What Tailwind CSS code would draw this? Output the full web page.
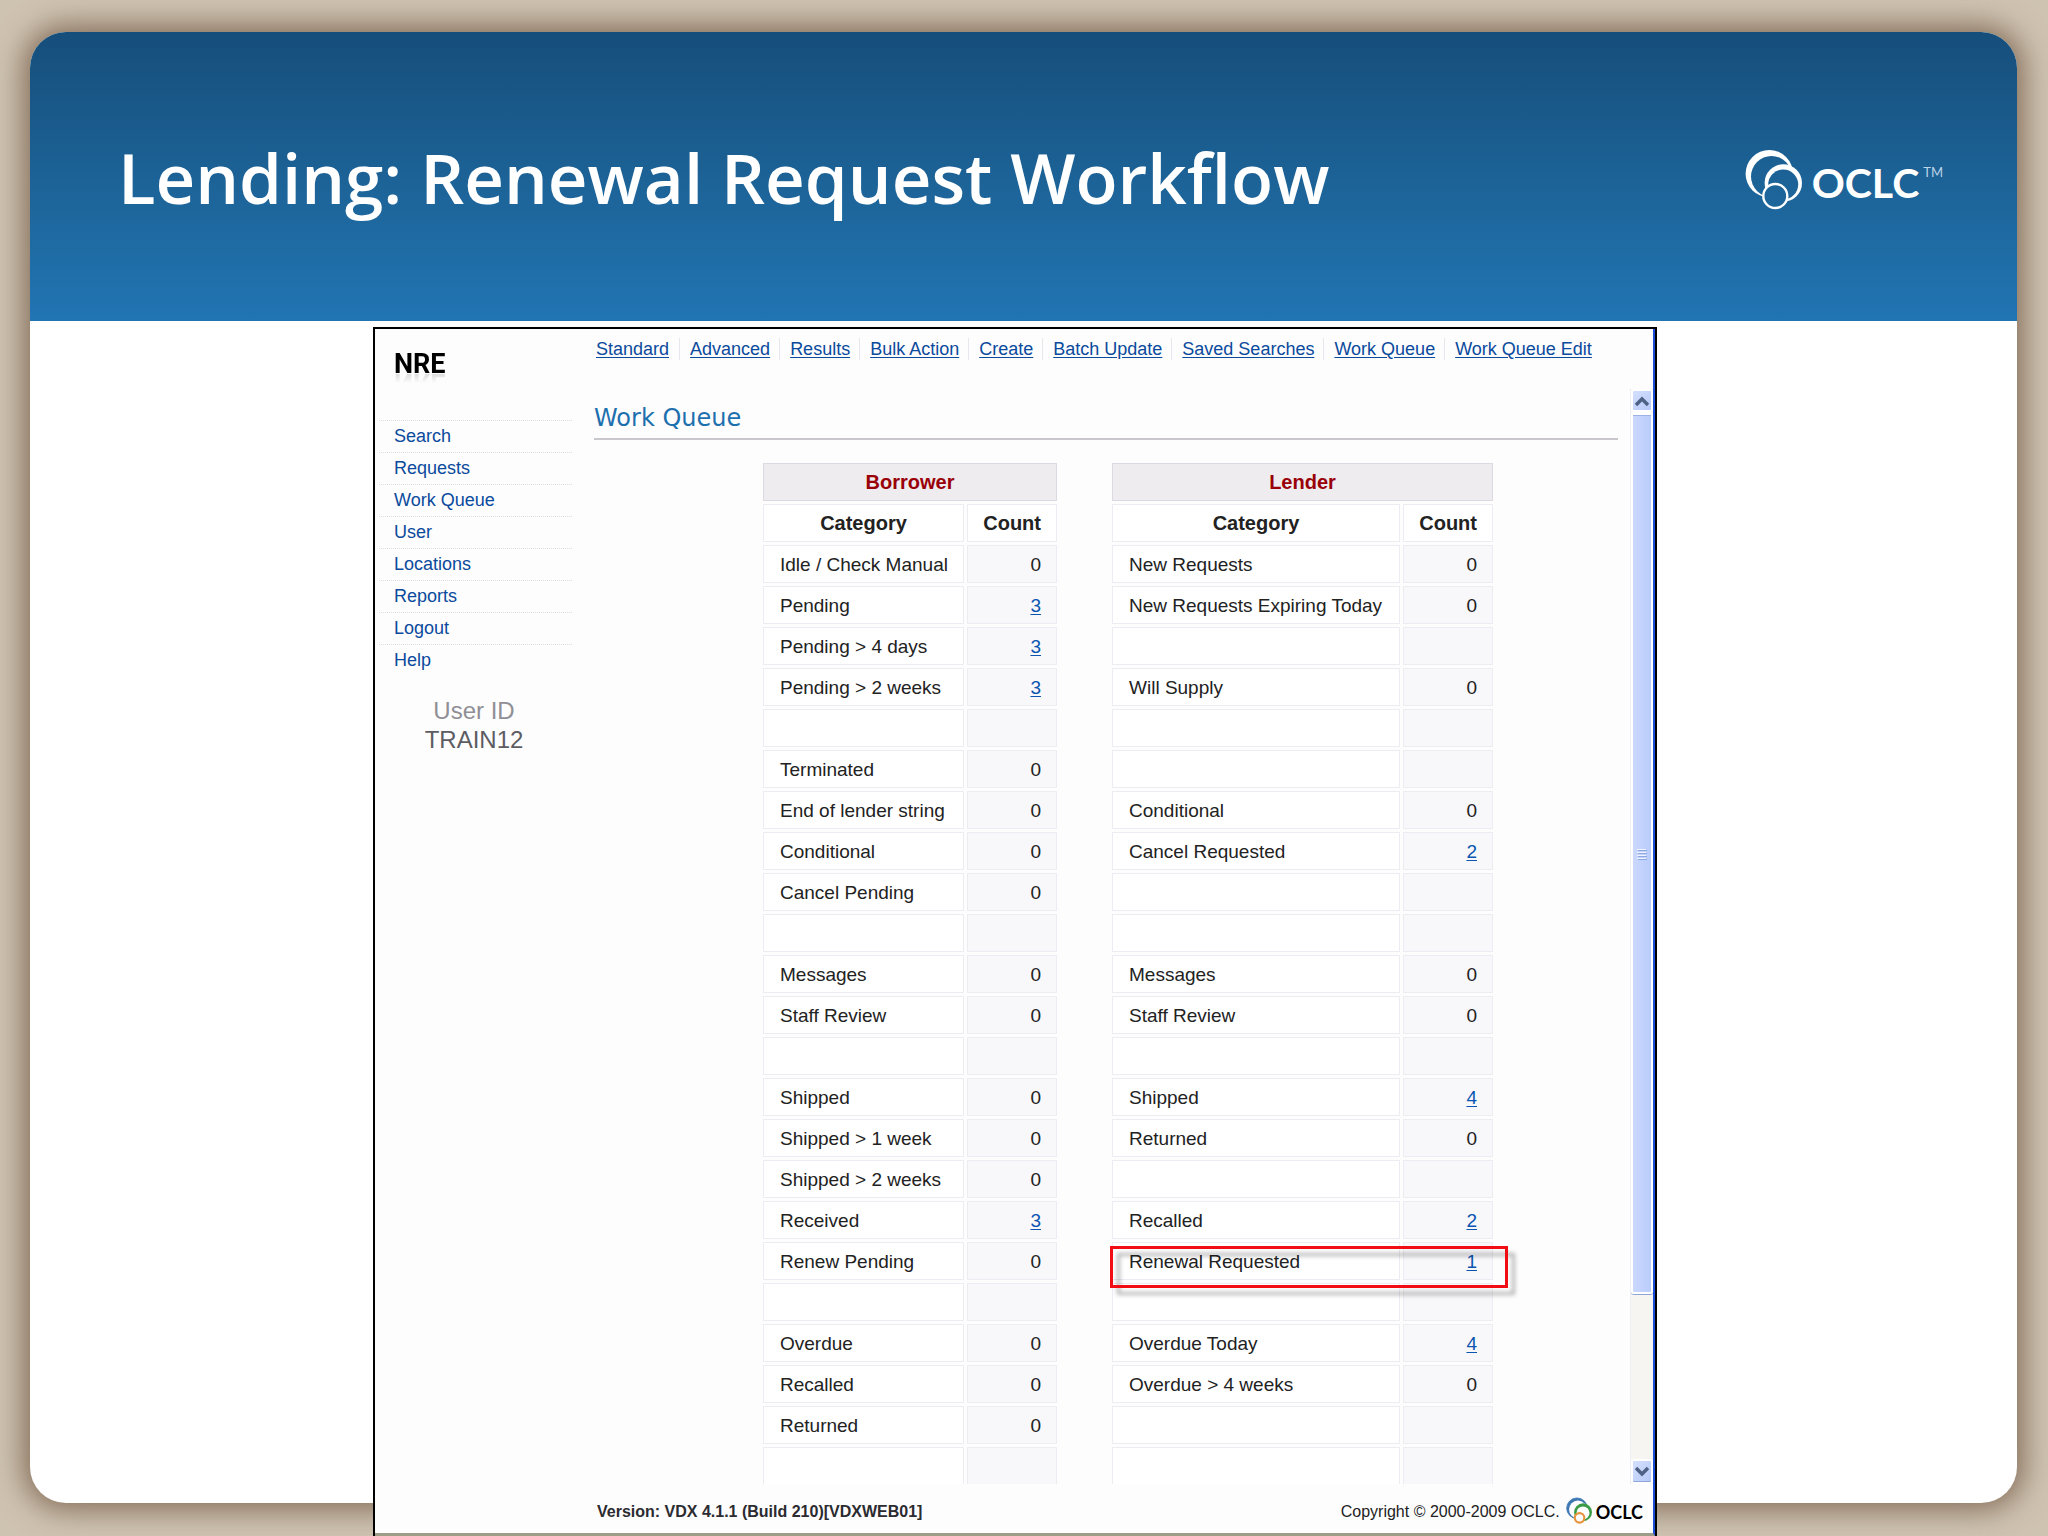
<!DOCTYPE html>
<html lang="en">
<head>
<meta charset="utf-8">
<title>Lending: Renewal Request Workflow</title>
<script src="https://cdn.jsdelivr.net/npm/@tailwindcss/browser@4"></script>
</head>
<body class="min-h-screen overflow-x-hidden bg-[#cec2b1] font-['Liberation_Sans',Arial,sans-serif] text-[#222]">
<svg class="absolute size-0" aria-hidden="true">
  <defs>
    <mask id="cut-big" maskUnits="userSpaceOnUse" x="0" y="0" width="60" height="62">
      <rect width="60" height="62" fill="#fff"/>
      <circle cx="27.500" cy="28.500" r="20.500" fill="#000"/>
      <circle cx="39.300" cy="35" r="17.500" fill="#000"/>
      <circle cx="31.300" cy="48" r="12" fill="#000"/>
    </mask>
    <mask id="cut-mid" maskUnits="userSpaceOnUse" x="0" y="0" width="60" height="62">
      <rect width="60" height="62" fill="#fff"/>
      <circle cx="39.200" cy="36.500" r="15" fill="#000"/>
      <circle cx="31.300" cy="48" r="12" fill="#000"/>
    </mask>
  </defs>
</svg>

<div class="pt-8 pr-[31px] pb-[33px] pl-[30px]">
  <div class="flow-root rounded-[36px] bg-white shadow-[0_0_28px_7px_#86705b]">
    <header class="flex h-[289px] items-center justify-between rounded-t-[36px] bg-linear-to-b from-[#164e7b] via-[#1c6296] to-[#2175b3] pr-[74px] pl-[88px]">
      <h1 class="font-['Open_Sans',sans-serif] text-[69px] leading-[80px] font-semibold text-white">Lending: Renewal Request Workflow</h1>
      <div class="flex items-center gap-2 pt-1 text-white">
        <svg class="h-[62px] w-[60px]" viewBox="0 0 60 62" fill="#fff" aria-hidden="true">
          <circle cx="25.3" cy="25.7" r="23.7" mask="url(#cut-big)"/>
          <circle cx="39.3" cy="35" r="18.7" mask="url(#cut-mid)"/>
          <circle cx="31.3" cy="48" r="12" fill="none" stroke="#fff" stroke-width="2.4"/>
        </svg>
        <div class="flex items-start pt-2 font-['Lato',sans-serif]">
          <span class="text-[41px] leading-[44px] font-bold">OCLC</span>
          <span class="pt-1 pl-1 text-[13px] leading-[14px] text-[#bcd3e6]">TM</span>
        </div>
      </div>
    </header>

    <div class="flow-root pt-[6px] pr-[360px] pl-[343px] -mb-[33px]">
      <div class="border-x-2 border-t-2 border-black bg-[#fdfdfe]">
        <div class="flex border-r-2 border-b-3 border-r-[#1c4fd8] border-b-[#9c9d88]">

          <aside class="w-[219px] shrink-0">
            <div class="flex h-[91px] items-center pb-[22px] pl-[19px]">
              <span class="font-['Roboto',sans-serif] text-[27px] leading-[28px] font-bold text-black [-webkit-box-reflect:below_-9px_linear-gradient(transparent_50%,rgb(0_0_0/0.2))]">NRE</span>
            </div>
            <ul id="side" class="mr-[22px] ml-1 text-[18px] leading-[31px]"></ul>
            <div class="mr-[21px] pt-5 text-center text-[24px] leading-[29px]">
              <p class="text-[#8f8f95]">User ID</p>
              <p class="text-[#5c5c62]">TRAIN12</p>
            </div>
          </aside>

          <div class="min-w-0 flex-1">
            <nav class="h-[60px] pt-[9px]">
              <ul id="top" class="flex text-[18px] leading-[22px] whitespace-nowrap"></ul>
            </nav>

            <div class="flex">
              <main class="min-w-0 flex-1">
                <h2 class="mr-[12px] h-[51px] border-b-2 border-[#c9c6cc] pt-[15px] font-['DejaVu_Sans',Verdana,sans-serif] text-[24px] leading-[28px] text-[#1d70ae]">Work Queue</h2>
                <div class="-mb-[3px] flex items-start justify-center gap-[49px] pt-5 pl-8">
                  <table class="w-[300px] table-fixed border-separate border-spacing-[3px] text-[19px] leading-[22px]">
                    <colgroup><col><col class="w-[90px]"></colgroup>
                    <thead><tr><th colspan="2" class="h-[38px] border border-[#dcdae0] bg-[#eeecee] p-0 text-[20px] text-[#990008]">Borrower</th></tr></thead>
                    <tbody id="borrower"></tbody>
                  </table>
                  <div class="relative">
                    <table class="w-[387px] table-fixed border-separate border-spacing-[3px] text-[19px] leading-[22px]">
                      <colgroup><col><col class="w-[90px]"></colgroup>
                      <thead><tr><th colspan="2" class="h-[38px] border border-[#dcdae0] bg-[#eeecee] p-0 text-[20px] text-[#990008]">Lender</th></tr></thead>
                      <tbody id="lender"></tbody>
                    </table>
                    <div class="pointer-events-none absolute top-[786px] -right-3 left-px h-[42px] border-3 border-[#f20d14] drop-shadow-[7px_7px_2px_rgb(0_0_0/0.3)]"></div>
                  </div>
                </div>
              </main>

              <div class="flex w-[23px] flex-col items-stretch border-l border-[#eeeef6] bg-[#f6f5f2]">
                <button type="button" aria-label="Scroll up" class="flex h-[23px] items-center justify-center rounded-[3px] border-2 border-white bg-linear-to-br from-[#d5e0fd] to-[#b5c8f8]">
                  <svg class="h-3 w-4" viewBox="0 0 16 12" fill="none" stroke="#4d6185" stroke-width="3.4"><path d="M2 10l6-6 6 6"/></svg>
                </button>
                <div class="flex h-[882px] items-center justify-center rounded-[3px] border-2 border-t-3 border-white bg-linear-to-r from-[#cbd8fd] to-[#b9ccfb] shadow-[0_1px_0_#8ea6d8,inset_0_1px_0_#9db2e6]">
                  <svg class="h-3 w-3" viewBox="0 0 12 12" fill="none"><path d="M1 1.500h9M1 4.500h9M1 7.500h9M1 10.500h9" stroke="#eef3ff"/><path d="M2 2.500h9M2 5.500h9M2 8.500h9M2 11.500h9" stroke="#8ea8e4"/></svg>
                </div>
                <div class="flex-1"></div>
                <button type="button" aria-label="Scroll down" class="flex h-[25px] items-center justify-center rounded-[3px] border-2 border-white bg-linear-to-br from-[#d5e0fd] to-[#b5c8f8] shadow-[inset_0_-1px_0_#8ea6d8]">
                  <svg class="h-3 w-4" viewBox="0 0 16 12" fill="none" stroke="#4d6185" stroke-width="3.4"><path d="M2 2l6 6 6-6"/></svg>
                </button>
              </div>
            </div>

            <footer class="flex h-[49px] items-center justify-between pt-[3px] pr-[10px] pl-[3px] text-[16px] leading-[20px]">
              <p class="pt-1 font-bold text-[#2b2b30]">Version: VDX 4.1.1 (Build 210)[VDXWEB01]</p>
              <div class="flex items-center gap-[6px]">
                <p class="pt-1">Copyright © 2000-2009 OCLC.</p>
                <div class="flex items-center gap-1">
                  <svg class="h-[27px] w-[26px]" viewBox="0 0 60 62" aria-hidden="true">
                    <circle cx="25.3" cy="25.7" r="23.7" fill="#3f78b3" stroke="#3f78b3" stroke-width="2" mask="url(#cut-big)"/>
                    <circle cx="39.3" cy="35" r="18.7" fill="#3a9c45" stroke="#3a9c45" stroke-width="4" mask="url(#cut-mid)"/>
                    <circle cx="31.3" cy="48" r="11" fill="none" stroke="#e8943c" stroke-width="5"/>
                  </svg>
                  <span class="pt-[3px] font-['Lato',sans-serif] text-[18px] leading-[20px] font-bold text-black">OCLC</span>
                </div>
              </div>
            </footer>
          </div>
        </div>
      </div>
    </div>
  </div>
</div>

<script>
const side = ["Search", "Requests", "Work Queue", "User", "Locations", "Reports", "Logout", "Help"];
const topLinks = ["Standard", "Advanced", "Results", "Bulk Action", "Create", "Batch Update", "Saved Searches", "Work Queue", "Work Queue Edit"];
const borrower = [["Idle / Check Manual", 0], ["Pending", 3], ["Pending > 4 days", 3], ["Pending > 2 weeks", 3], null, ["Terminated", 0], ["End of lender string", 0], ["Conditional", 0], ["Cancel Pending", 0], null, ["Messages", 0], ["Staff Review", 0], null, ["Shipped", 0], ["Shipped > 1 week", 0], ["Shipped > 2 weeks", 0], ["Received", 3], ["Renew Pending", 0], null, ["Overdue", 0], ["Recalled", 0], ["Returned", 0], null];
const lender = [["New Requests", 0], ["New Requests Expiring Today", 0], null, ["Will Supply", 0], null, null, ["Conditional", 0], ["Cancel Requested", 2], null, null, ["Messages", 0], ["Staff Review", 0], null, ["Shipped", 4], ["Returned", 0], null, ["Recalled", 2], ["Renewal Requested", 1], null, ["Overdue Today", 4], ["Overdue > 4 weeks", 0], null, null];

document.getElementById("side").innerHTML = side.map(t =>
  `<li class="border-t border-dotted border-[#dcdce4] pl-[15px]"><a href="#" class="text-[#0b4a9c]">${t}</a></li>`).join("");
document.getElementById("top").innerHTML = topLinks.map((t, i) =>
  `<li class="${i ? "border-l border-[#e6e6ec] pr-[9px] pl-[10px]" : "pr-[10px] pl-[2px]"}"><a href="#" class="text-[#0b4a9c] underline underline-offset-2">${t}</a></li>`).join("");

function body(rows) {
  const head = `<tr><th class="h-[38px] border border-[#eeebf2] bg-white p-0 text-[20px]">Category</th><th class="h-[38px] border border-[#eeebf2] bg-white p-0 pr-[15px] text-right text-[20px]">Count</th></tr>`;
  return head + rows.map((r, i) => {
    const last = i === rows.length - 1;
    const name = r ? r[0].replace(">", "&gt;") : "";
    const count = !r ? "" : r[1] ? `<a href="#" class="text-[#0b55b0] underline underline-offset-2">${r[1]}</a>` : "0";
    return `<tr><td class="${last ? "h-[37px] border-x border-t border-[#eeebf2] bg-white p-0" : "h-[38px] border border-[#eeebf2] bg-white pt-0.5 pr-0 pb-0 pl-4 whitespace-nowrap"}">${name}</td><td class="${last ? "h-[37px] border-x border-t border-[#eeebf2] bg-[#f8f7fa] p-0" : "h-[38px] border border-[#eeebf2] bg-[#f8f7fa] pt-0.5 pr-[15px] pb-0 pl-0 text-right"}">${count}</td></tr>`;
  }).join("");
}
document.getElementById("borrower").innerHTML = body(borrower);
document.getElementById("lender").innerHTML = body(lender);
</script>
</body>
</html>
